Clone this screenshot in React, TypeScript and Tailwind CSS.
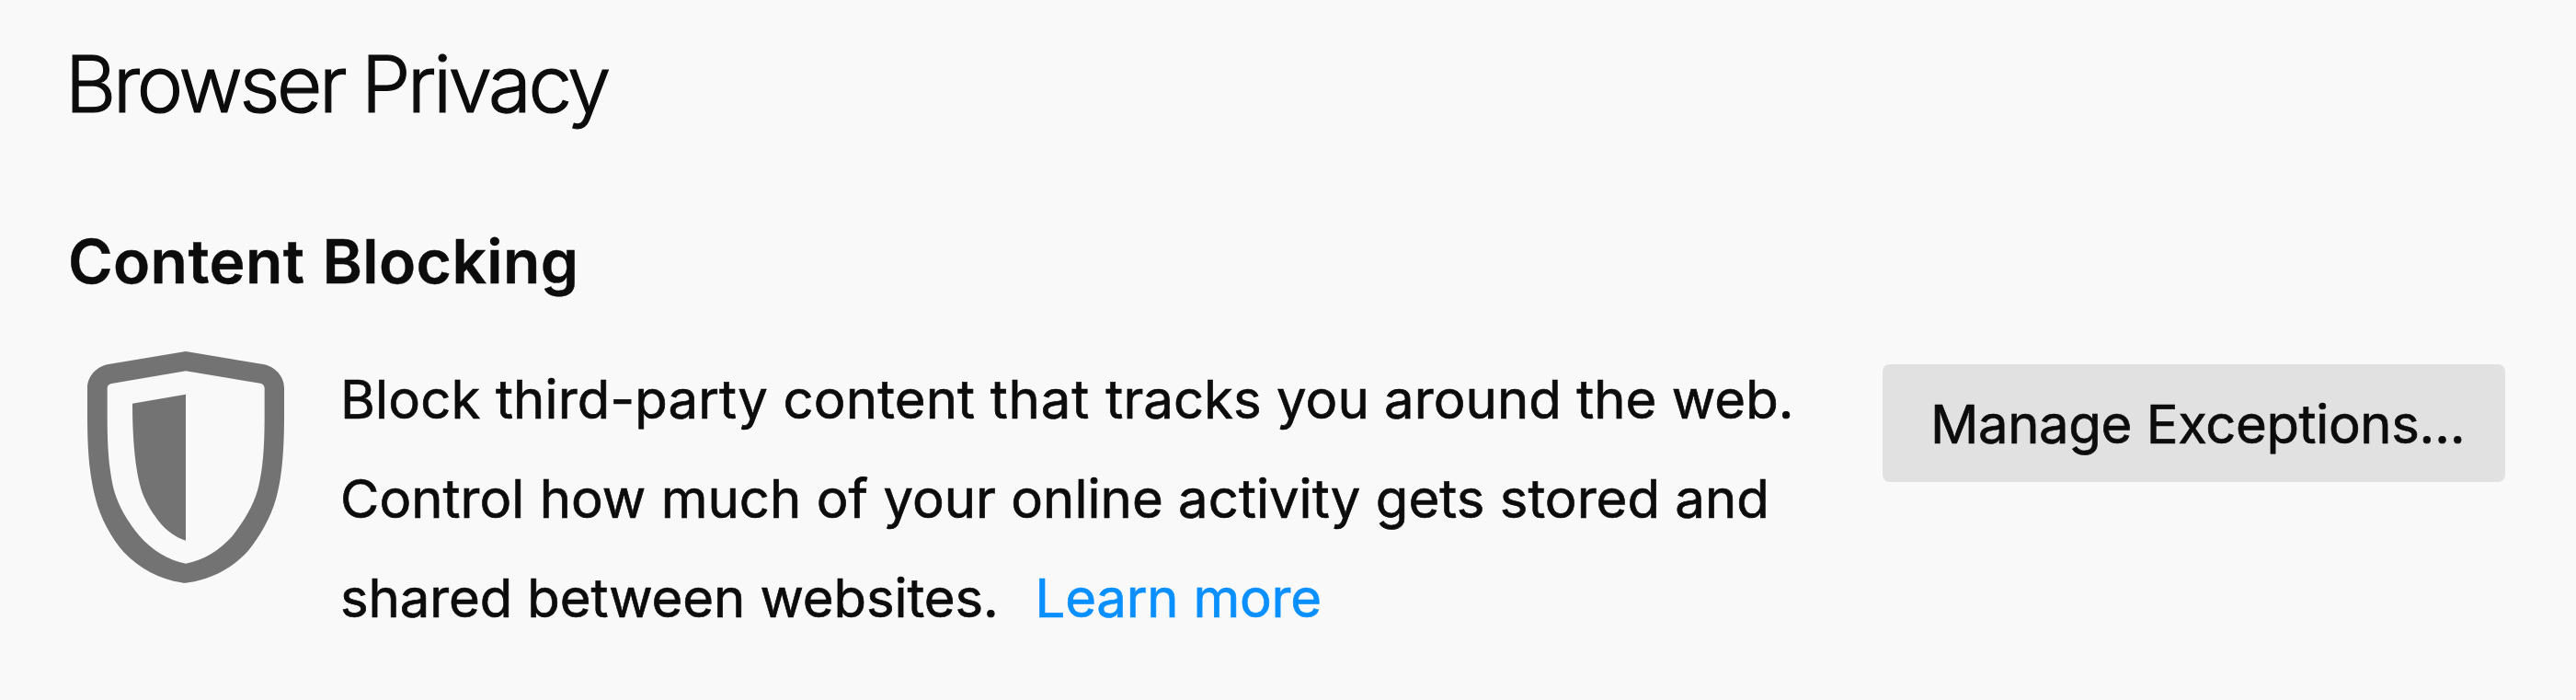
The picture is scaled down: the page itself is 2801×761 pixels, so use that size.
function ShieldIcon() {
  return (
    <svg
      aria-hidden="true"
      viewBox="45 36 642 756"
      className="mt-[2px] h-[252px] w-[214px] shrink-0 fill-[#737373]"
    >
      <path
        fillRule="evenodd"
        d="M366 36L618 78C658 86 687 117 687 156V245C687 367 679 447 661 514C643 580 607 641 569 687C513 748 445 779 374 790Q363 793 352 790C283 779 218 747 163 690C123 644 88 582 71 514C53 444 45 367 45 245V156C45 117 74 86 114 78ZM366 100L124 141Q110 144 110 157V245C110 360 117 429 132 490C147 543 178 594 214 637C258 687 309 717 366 728C423 717 474 687 518 638C553 594 585 543 600 490C616 429 623 360 623 245V157Q623 144 609 140Z"
      />
      <path d="M366 176V653C333 642 303 621 278 590C251 556 230 519 219 481C202 420 192 330 192 206Z" />
    </svg>
  );
}

export default function App() {
  return (
    <main className="flex h-[761px] w-[2801px] flex-col overflow-hidden bg-[#f9f9fa] pt-10 pl-[71px] font-['Inter','Liberation_Sans',sans-serif] text-[#0c0c0d]">
      <h1 className="text-[85px] leading-[104px] font-light tracking-[-3.27px] whitespace-nowrap [-webkit-text-stroke:1.2px_#0c0c0d] [word-spacing:-2px]">
        Browser Privacy
      </h1>
      <h2 className="mt-[100px] ml-[3px] text-[66px] leading-[80px] font-semibold tracking-[0.4px] whitespace-nowrap [-webkit-text-stroke:0.4px_#0c0c0d] [word-spacing:2px]">
        Content Blocking
      </h2>
      <section className="mt-14 flex items-start pl-6">
        <ShieldIcon />
        <div className="ml-[61px] w-[1677px] text-[58px] leading-[108px] whitespace-nowrap [-webkit-text-stroke:0.7px]">
          <p className="tracking-[0.15px]">
            Block third-party content <span className="tracking-[0.9px]">that </span>
            <span className="tracking-[0.06px]">tracks you around the web.</span>
          </p>
          <p className="tracking-[0.04px]">Control how much of your online activity gets stored and</p>
          <p className="tracking-[-0.09px]">
            shared between websites.
            <a href="#learn-more" className="ml-[40px] tracking-[-0.2px] text-[#0a8fff]">
              Learn more
            </a>
          </p>
        </div>
        <button
          type="button"
          className="mt-4 flex h-[128px] w-[677px] items-center rounded-lg bg-[#e1e1e1] pt-[2px] pl-[52px] text-[58px] tracking-[-0.38px] whitespace-nowrap [-webkit-text-stroke:0.7px]"
        >
          Manage Exceptions…
        </button>
      </section>
    </main>
  );
}
